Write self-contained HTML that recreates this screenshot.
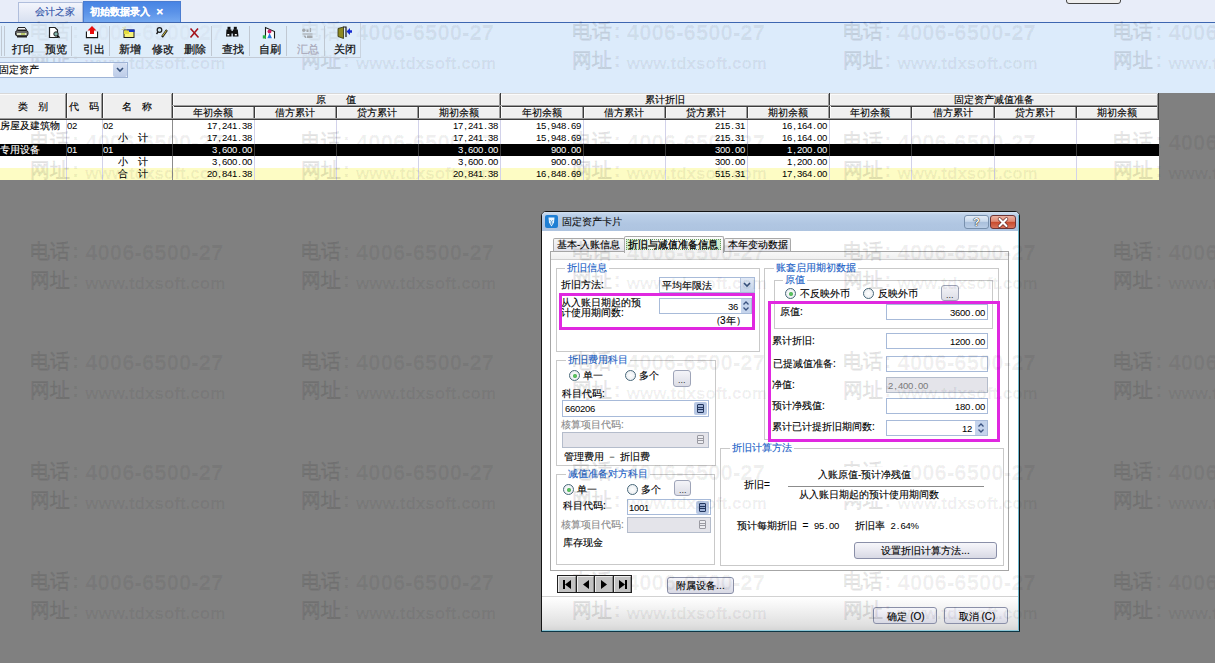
<!DOCTYPE html>
<html><head><meta charset="utf-8">
<style>
*{box-sizing:border-box;margin:0;padding:0}
html,body{width:1215px;height:663px;overflow:hidden;background:#808080;font-family:"Liberation Sans",sans-serif;font-size:10px;color:#000}
.a{position:absolute}
.t{position:absolute;white-space:nowrap;line-height:10px;font-size:10px;-webkit-text-stroke:0.12px currentColor}
.num{font-size:9.5px;-webkit-text-stroke:0}
.num b{display:inline-block;width:5px;text-align:center;font-weight:normal}
/* top */
#top{left:0;top:0;width:1215px;height:22px;background:#e8edf9}
#bline{left:0;top:22px;width:1215px;height:1px;background:#3d66b0}
#tbarea{left:0;top:23px;width:1215px;height:70px;background:#dcebfb}
#tb{left:0;top:23px;width:361px;height:35px;background:rgba(226,238,250,0.55);border-right:1px solid #c9d3df;border-bottom:1px solid #c3cbd6}
.sep{position:absolute;top:26px;width:1px;height:30px;background:#c0c8d2}
.tbt{position:absolute;top:44px;font-size:10.5px;line-height:11px;color:#111;white-space:nowrap;-webkit-text-stroke:0.25px currentColor}
/* table */
#tbl{left:0;top:93px;width:1158px;height:87px;background:#fff}
.hd{position:absolute;background:#efefef}
.vl{position:absolute;width:1px}
.hl{position:absolute;height:1px}

.radio{width:11px;height:11px;border:1px solid #48687a;border-radius:50%;background:radial-gradient(#fff,#e4e8ec)}
.radio.on::after{content:"";position:absolute;left:2.5px;top:2.5px;width:4px;height:4px;border-radius:50%;background:radial-gradient(#6ad06a,#289838)}
.dots{border:1px solid #9ea4b8;border-radius:3px;background:linear-gradient(#f4f4f8,#dcdde6)}
.dots::after{content:"...";position:absolute;left:4px;top:4px;font-size:9px;color:#333;letter-spacing:0px}
.inp{border:1px solid #a7bad9;background:#fff}
.inp.dis{background:#e4e4ea;border-color:#b4bccb}
.lk{width:13px;height:13px;background:#b9c9e5;border-radius:2px}
.lk::after{content:"";position:absolute;left:3px;top:2px;width:5px;height:7px;border:1.5px solid #22365e;border-radius:1px;background:linear-gradient(#22365e,#22365e) 0 2px/100% 1px no-repeat,linear-gradient(#22365e,#22365e) 0 4px/100% 1px no-repeat,#9fb3d8}
.lk.dis{background:transparent}
.lk.dis::after{border-color:#9a9aa2;background:linear-gradient(#9a9aa2,#9a9aa2) 0 2px/100% 1px no-repeat,linear-gradient(#9a9aa2,#9a9aa2) 0 4px/100% 1px no-repeat,#ececf0}
.btn{border:1px solid #8a8fa8;border-radius:3px;background:linear-gradient(#f6f6fa 0%,#e8e8f0 50%,#d8d9e4 100%)}
.nav{display:flex;border:1px solid #202020;background:#202020;gap:1px;height:18px;z-index:60}
.nb{width:17.5px;height:16px;background:#c2c2c2;border-top:1px solid #ececec;border-left:1px solid #ececec;border-right:1px solid #8a8a8a}
.nb svg{display:block;margin-left:-1px;margin-top:-1px}

.wm{position:absolute;white-space:nowrap;font-size:20px;line-height:20px;font-weight:bold;color:rgba(0,0,0,0.06);-webkit-text-stroke:0.5px rgba(0,0,0,0.06)}
.wm i{font-style:normal;margin-left:2px}
.wm.d{font-size:22px;letter-spacing:0.1px}
.wm.u{font-size:17px}
</style></head><body>
<div class="a" id="top"></div>
<div class="a" style="left:1066px;top:-3px;width:55px;height:7px;border:1px solid #444;border-radius:3px;background:#eee"></div>
<div class="a" style="left:18px;top:2px;width:65px;height:20px;background:linear-gradient(#f3f5fc,#d8e0f0);border:1px solid #b0bedc;border-bottom:none"></div>
<div class="t" style="left:35px;top:7px;color:#2b4ea6;font-size:10px">会计之家</div>
<div class="a" style="left:83px;top:1px;width:98px;height:21px;background:linear-gradient(#4784e4,#5a92e8 50%,#74a8f0);border:1px solid #4a7cd0;border-bottom:none"></div>
<div class="t" style="left:90px;top:7px;color:#fff;font-weight:bold;font-size:10px">初始数据录入 <span style="font-size:9px;margin-left:3px">✕</span></div>
<div class="a" id="bline"></div>
<div class="a" id="tbarea"></div>
<div class="a" style="left:0;top:0;width:1215px;height:60px;z-index:60">
<div class="a" id="tb"></div>
<div class="sep" style="left:1px"></div>
<div class="sep" style="left:4px"></div>
<div class="sep" style="left:71px"></div>
<div class="sep" style="left:109px"></div>
<div class="sep" style="left:211px"></div>
<div class="sep" style="left:249px"></div>
<div class="sep" style="left:286px"></div>
<div class="sep" style="left:324px"></div>
<!--ICONS-->
<svg class="a" style="left:0;top:0" width="365" height="60" viewBox="0 0 365 60">
<!-- printer -->
<g>
<path d="M18 27.5 H25 L26.5 30 H17 Z" fill="#f4f4f4" stroke="#222" stroke-width="1"/>
<rect x="15.5" y="30.5" width="12.5" height="5.5" rx="2" fill="#6a6a6a" stroke="#1e1e1e" stroke-width="1"/>
<rect x="17" y="33" width="9.5" height="2" fill="#dfe6c8"/>
<rect x="21" y="33" width="4" height="2" fill="#b9c86a"/>
<rect x="17" y="36" width="10" height="1.5" fill="#222"/>
</g>
<!-- preview -->
<g>
<path d="M49.5 27.5 H55 L57.5 30 V37.5 H49.5 Z" fill="#fff" stroke="#222" stroke-width="1.2"/>
<circle cx="56" cy="34" r="2.2" fill="#7fb3a8" stroke="#1e1e1e" stroke-width="1"/>
<path d="M57.5 35.5 L59.5 37.8" stroke="#111" stroke-width="1.4"/>
</g>
<!-- export -->
<g>
<path d="M86.5 31.5 V37.5 H97.5 V31.5" fill="#fff" stroke="#1a1a1a" stroke-width="1.3"/>
<rect x="87" y="32" width="10" height="5" fill="#fff"/>
<path d="M92 26 L96.5 30.5 H94 V34 H90 V30.5 H87.5 Z" fill="#e80c0c"/>
</g>
<!-- new -->
<g>
<rect x="124" y="30" width="10" height="7.5" fill="#f7f37a" stroke="#1a1a1a" stroke-width="1"/>
<rect x="127" y="29.5" width="7.5" height="2.5" fill="#1230c8"/>
<path d="M124 30.5 H129 V34 H124" fill="#e3dc40"/>
<path d="M122.5 27 L124.5 29 M125 26.5 V28.5 M121.5 29.5 H123.5" stroke="#d8d080" stroke-width="0.8"/>
</g>
<!-- modify -->
<g>
<circle cx="159.5" cy="30" r="2.3" fill="#cfe6f0" stroke="#1d1d1d" stroke-width="1.2"/>
<path d="M158 32 L156.5 34" stroke="#1d1d1d" stroke-width="1.4"/>
<path d="M167 30 L162 37" stroke="#1d1d1d" stroke-width="2.2"/>
<path d="M166.5 30.5 L162.5 36" stroke="#e6d040" stroke-width="0.9"/>
</g>
<!-- delete -->
<path d="M190.5 28.5 L198.5 37.5 M198 28.5 L190.5 37.5" stroke="#a5141e" stroke-width="1.6"/>
<!-- find binoculars -->
<g fill="#111">
<rect x="227.5" y="26.8" width="3" height="3"/>
<rect x="233.8" y="26.8" width="3" height="3"/>
<path d="M226.5 29.5 H231.5 V36.5 H226 Z"/>
<path d="M232.8 29.5 H237.8 L238.5 36.5 H232.8 Z"/>
<rect x="231" y="31" width="2" height="2.5"/>
<rect x="227.3" y="34" width="2" height="1.5" fill="#fff"/>
<rect x="234.8" y="34" width="2" height="1.5" fill="#fff"/>
</g>
<!-- refresh -->
<g>
<path d="M265.5 38.5 V27.5 L274.5 31.5 V38.5" fill="#fff" stroke="#1a1a1a" stroke-width="1.1"/>
<circle cx="269.5" cy="31.5" r="2" fill="#d0206a"/>
<path d="M269.5 33 L267.3 38.3 H272 Z" fill="#2a7ae0"/>
<rect x="262.8" y="35.3" width="3.2" height="3.2" fill="#22b040"/>
</g>
<!-- summary gray -->
<g fill="#a4a8ac">
<circle cx="303.8" cy="30.3" r="1.7"/>
<path d="M306.5 29.5 h2 v2.5 h-2 z M309.8 28 h1.3 v4 h-1.3 z"/>
<path d="M302.5 33.5 h10 v1 h-10 z"/>
<path d="M303.5 35.5 h2 l1 2.5 h-1.5 z M307 35.5 h5.5 v2.6 h-5.5 z"/>
</g>
<!-- close door -->
<g>
<path d="M343 27 H346 V37" fill="none" stroke="#1a1a1a" stroke-width="1.2"/>
<path d="M338 28.5 L343.5 27 V38.5 L338 36.5 Z" fill="#8f8a22" stroke="#2e2e10" stroke-width="0.8"/>
<path d="M346.5 31.5 L350 28 V30.3 H352 V32.7 H350 V35 Z" fill="#1428d0"/>
</g>
</svg>

<!--/ICONS-->
<div class="tbt" style="left:12px">打印</div>
<div class="tbt" style="left:45px">预览</div>
<div class="tbt" style="left:83px">引出</div>
<div class="tbt" style="left:119px">新增</div>
<div class="tbt" style="left:152px">修改</div>
<div class="tbt" style="left:184px">删除</div>
<div class="tbt" style="left:222px">查找</div>
<div class="tbt" style="left:259px">自刷</div>
<div class="tbt" style="left:297px;color:#aab">汇总</div>
<div class="tbt" style="left:334px">关闭</div>
</div>
<!-- combo -->
<div class="a" style="left:0;top:0;width:130px;height:80px;z-index:60">
<div class="a" style="left:-1px;top:62px;width:129px;height:16px;background:#fff;border:1px solid #9fb4d6"></div>
<div class="t" style="left:-1px;top:65px;font-size:10px">固定资产</div>
<div class="a" style="left:113px;top:63px;width:14px;height:14px;background:linear-gradient(#d6e0f2,#bccce8);border-radius:2px"></div>
<svg class="a" style="left:115px;top:66px" width="10" height="8" viewBox="0 0 10 8"><path d="M2 2 L5 5 L8 2" stroke="#35507a" stroke-width="1.6" fill="none"/></svg>
</div>

<!-- TABLE placeholder -->
<!--TBL-->
<div class="a" style="left:0;top:93px;width:1158px;height:27px;background:#efefef"></div>
<div class="a" style="left:0;top:120px;width:1159px;height:60px;background:#fff"></div>
<div class="a" style="left:0;top:144px;width:1159px;height:12px;background:#000000"></div>
<div class="a" style="left:0;top:168px;width:1159px;height:12px;background:#fdfcc4"></div>
<div class="vl" style="left:66px;top:120px;height:60px;background:#d2d2ea"></div>
<div class="vl" style="left:102px;top:120px;height:60px;background:#d2d2ea"></div>
<div class="vl" style="left:172px;top:120px;height:60px;background:#8c8c8c"></div>
<div class="vl" style="left:254px;top:120px;height:60px;background:#d2d2ea"></div>
<div class="vl" style="left:336px;top:120px;height:60px;background:#d2d2ea"></div>
<div class="vl" style="left:418px;top:120px;height:60px;background:#d2d2ea"></div>
<div class="vl" style="left:500px;top:120px;height:60px;background:#d2d2ea"></div>
<div class="vl" style="left:583px;top:120px;height:60px;background:#d2d2ea"></div>
<div class="vl" style="left:665px;top:120px;height:60px;background:#d2d2ea"></div>
<div class="vl" style="left:747px;top:120px;height:60px;background:#d2d2ea"></div>
<div class="vl" style="left:829px;top:120px;height:60px;background:#d2d2ea"></div>
<div class="vl" style="left:911px;top:120px;height:60px;background:#d2d2ea"></div>
<div class="vl" style="left:994px;top:120px;height:60px;background:#d2d2ea"></div>
<div class="vl" style="left:1076px;top:120px;height:60px;background:#d2d2ea"></div>
<div class="hl" style="left:0;top:93px;width:1158px;background:#d8d8d8"></div>
<div class="hl" style="left:0;top:94px;width:1158px;background:#fbfbfb"></div>
<div class="hl" style="left:172px;top:106px;width:986px;background:#3c3c3c"></div>
<div class="hl" style="left:172px;top:107px;width:986px;background:#fbfbfb"></div>
<div class="hl" style="left:0;top:119px;width:1158px;background:#3c3c3c"></div>
<div class="vl" style="left:66px;top:93px;height:27px;background:#3c3c3c"></div>
<div class="vl" style="left:67px;top:94px;height:25px;background:#fbfbfb"></div>
<div class="vl" style="left:102px;top:93px;height:27px;background:#3c3c3c"></div>
<div class="vl" style="left:103px;top:94px;height:25px;background:#fbfbfb"></div>
<div class="vl" style="left:172px;top:93px;height:27px;background:#3c3c3c"></div>
<div class="vl" style="left:173px;top:94px;height:25px;background:#fbfbfb"></div>
<div class="vl" style="left:500px;top:93px;height:27px;background:#3c3c3c"></div>
<div class="vl" style="left:501px;top:94px;height:25px;background:#fbfbfb"></div>
<div class="vl" style="left:829px;top:93px;height:27px;background:#3c3c3c"></div>
<div class="vl" style="left:830px;top:94px;height:25px;background:#fbfbfb"></div>
<div class="vl" style="left:1158px;top:93px;height:27px;background:#3c3c3c"></div>

<div class="vl" style="left:254px;top:106px;height:14px;background:#3c3c3c"></div>
<div class="vl" style="left:255px;top:107px;height:12px;background:#fbfbfb"></div>
<div class="vl" style="left:336px;top:106px;height:14px;background:#3c3c3c"></div>
<div class="vl" style="left:337px;top:107px;height:12px;background:#fbfbfb"></div>
<div class="vl" style="left:418px;top:106px;height:14px;background:#3c3c3c"></div>
<div class="vl" style="left:419px;top:107px;height:12px;background:#fbfbfb"></div>
<div class="vl" style="left:583px;top:106px;height:14px;background:#3c3c3c"></div>
<div class="vl" style="left:584px;top:107px;height:12px;background:#fbfbfb"></div>
<div class="vl" style="left:665px;top:106px;height:14px;background:#3c3c3c"></div>
<div class="vl" style="left:666px;top:107px;height:12px;background:#fbfbfb"></div>
<div class="vl" style="left:747px;top:106px;height:14px;background:#3c3c3c"></div>
<div class="vl" style="left:748px;top:107px;height:12px;background:#fbfbfb"></div>
<div class="vl" style="left:911px;top:106px;height:14px;background:#3c3c3c"></div>
<div class="vl" style="left:912px;top:107px;height:12px;background:#fbfbfb"></div>
<div class="vl" style="left:994px;top:106px;height:14px;background:#3c3c3c"></div>
<div class="vl" style="left:995px;top:107px;height:12px;background:#fbfbfb"></div>
<div class="vl" style="left:1076px;top:106px;height:14px;background:#3c3c3c"></div>
<div class="vl" style="left:1077px;top:107px;height:12px;background:#fbfbfb"></div>
<div class="vl" style="left:65px;top:94px;height:25px;background:#9c9c9c"></div>
<div class="vl" style="left:101px;top:94px;height:25px;background:#9c9c9c"></div>
<div class="vl" style="left:171px;top:94px;height:25px;background:#9c9c9c"></div>
<div class="vl" style="left:499px;top:94px;height:25px;background:#9c9c9c"></div>
<div class="vl" style="left:828px;top:94px;height:25px;background:#9c9c9c"></div>
<div class="vl" style="left:1157px;top:94px;height:25px;background:#9c9c9c"></div>
<div class="vl" style="left:253px;top:107px;height:12px;background:#9c9c9c"></div>
<div class="vl" style="left:335px;top:107px;height:12px;background:#9c9c9c"></div>
<div class="vl" style="left:417px;top:107px;height:12px;background:#9c9c9c"></div>
<div class="vl" style="left:582px;top:107px;height:12px;background:#9c9c9c"></div>
<div class="vl" style="left:664px;top:107px;height:12px;background:#9c9c9c"></div>
<div class="vl" style="left:746px;top:107px;height:12px;background:#9c9c9c"></div>
<div class="vl" style="left:910px;top:107px;height:12px;background:#9c9c9c"></div>
<div class="vl" style="left:993px;top:107px;height:12px;background:#9c9c9c"></div>
<div class="vl" style="left:1075px;top:107px;height:12px;background:#9c9c9c"></div>
<div class="hl" style="left:172px;top:105px;width:986px;background:#9c9c9c"></div>
<div class="hl" style="left:0;top:118px;width:1158px;background:#9c9c9c"></div>
<div class="t" style="left:0px;top:102px;width:66px;text-align:center;">类　别</div>
<div class="t" style="left:66px;top:102px;width:36px;text-align:center;">代　码</div>
<div class="t" style="left:102px;top:102px;width:70px;text-align:center;">名　称</div>
<div class="t" style="left:172px;top:95px;width:328px;text-align:center;">原　　值</div>
<div class="t" style="left:500px;top:95px;width:329px;text-align:center;">累计折旧</div>
<div class="t" style="left:829px;top:95px;width:329px;text-align:center;">固定资产减值准备</div>
<div class="t" style="left:172px;top:108px;width:82px;text-align:center;">年初余额</div>
<div class="t" style="left:254px;top:108px;width:82px;text-align:center;">借方累计</div>
<div class="t" style="left:336px;top:108px;width:82px;text-align:center;">贷方累计</div>
<div class="t" style="left:418px;top:108px;width:82px;text-align:center;">期初余额</div>
<div class="t" style="left:500px;top:108px;width:83px;text-align:center;">年初余额</div>
<div class="t" style="left:583px;top:108px;width:82px;text-align:center;">借方累计</div>
<div class="t" style="left:665px;top:108px;width:82px;text-align:center;">贷方累计</div>
<div class="t" style="left:747px;top:108px;width:82px;text-align:center;">期初余额</div>
<div class="t" style="left:829px;top:108px;width:82px;text-align:center;">年初余额</div>
<div class="t" style="left:911px;top:108px;width:83px;text-align:center;">借方累计</div>
<div class="t" style="left:994px;top:108px;width:82px;text-align:center;">贷方累计</div>
<div class="t" style="left:1076px;top:108px;width:82px;text-align:center;">期初余额</div>
<div class="t" style="left:0px;top:121px;color:#000">房屋及建筑物</div>
<div class="t num" style="left:67px;top:121px;color:#000"><b>0</b><b>2</b></div>
<div class="t num" style="left:103px;top:121px;color:#000"><b>0</b><b>2</b></div>
<div class="t num" style="left:172px;width:80px;text-align:right;top:121px;color:#000"><b>1</b><b>7</b><b>,</b><b>2</b><b>4</b><b>1</b><b>.</b><b>3</b><b>8</b></div>
<div class="t num" style="left:418px;width:80px;text-align:right;top:121px;color:#000"><b>1</b><b>7</b><b>,</b><b>2</b><b>4</b><b>1</b><b>.</b><b>3</b><b>8</b></div>
<div class="t num" style="left:501px;width:80px;text-align:right;top:121px;color:#000"><b>1</b><b>5</b><b>,</b><b>9</b><b>4</b><b>8</b><b>.</b><b>6</b><b>9</b></div>
<div class="t num" style="left:665px;width:80px;text-align:right;top:121px;color:#000"><b>2</b><b>1</b><b>5</b><b>.</b><b>3</b><b>1</b></div>
<div class="t num" style="left:747px;width:80px;text-align:right;top:121px;color:#000"><b>1</b><b>6</b><b>,</b><b>1</b><b>6</b><b>4</b><b>.</b><b>0</b><b>0</b></div>
<div class="t" style="left:118px;top:133px;color:#000">小　计</div>
<div class="t num" style="left:172px;width:80px;text-align:right;top:133px;color:#000"><b>1</b><b>7</b><b>,</b><b>2</b><b>4</b><b>1</b><b>.</b><b>3</b><b>8</b></div>
<div class="t num" style="left:418px;width:80px;text-align:right;top:133px;color:#000"><b>1</b><b>7</b><b>,</b><b>2</b><b>4</b><b>1</b><b>.</b><b>3</b><b>8</b></div>
<div class="t num" style="left:501px;width:80px;text-align:right;top:133px;color:#000"><b>1</b><b>5</b><b>,</b><b>9</b><b>4</b><b>8</b><b>.</b><b>6</b><b>9</b></div>
<div class="t num" style="left:665px;width:80px;text-align:right;top:133px;color:#000"><b>2</b><b>1</b><b>5</b><b>.</b><b>3</b><b>1</b></div>
<div class="t num" style="left:747px;width:80px;text-align:right;top:133px;color:#000"><b>1</b><b>6</b><b>,</b><b>1</b><b>6</b><b>4</b><b>.</b><b>0</b><b>0</b></div>
<div class="t" style="left:0px;top:145px;color:#fff">专用设备</div>
<div class="t num" style="left:67px;top:145px;color:#fff"><b>0</b><b>1</b></div>
<div class="t num" style="left:103px;top:145px;color:#fff"><b>0</b><b>1</b></div>
<div class="t num" style="left:172px;width:80px;text-align:right;top:145px;color:#fff"><b>3</b><b>,</b><b>6</b><b>0</b><b>0</b><b>.</b><b>0</b><b>0</b></div>
<div class="t num" style="left:418px;width:80px;text-align:right;top:145px;color:#fff"><b>3</b><b>,</b><b>6</b><b>0</b><b>0</b><b>.</b><b>0</b><b>0</b></div>
<div class="t num" style="left:501px;width:80px;text-align:right;top:145px;color:#fff"><b>9</b><b>0</b><b>0</b><b>.</b><b>0</b><b>0</b></div>
<div class="t num" style="left:665px;width:80px;text-align:right;top:145px;color:#fff"><b>3</b><b>0</b><b>0</b><b>.</b><b>0</b><b>0</b></div>
<div class="t num" style="left:747px;width:80px;text-align:right;top:145px;color:#fff"><b>1</b><b>,</b><b>2</b><b>0</b><b>0</b><b>.</b><b>0</b><b>0</b></div>
<div class="t" style="left:118px;top:157px;color:#000">小　计</div>
<div class="t num" style="left:172px;width:80px;text-align:right;top:157px;color:#000"><b>3</b><b>,</b><b>6</b><b>0</b><b>0</b><b>.</b><b>0</b><b>0</b></div>
<div class="t num" style="left:418px;width:80px;text-align:right;top:157px;color:#000"><b>3</b><b>,</b><b>6</b><b>0</b><b>0</b><b>.</b><b>0</b><b>0</b></div>
<div class="t num" style="left:501px;width:80px;text-align:right;top:157px;color:#000"><b>9</b><b>0</b><b>0</b><b>.</b><b>0</b><b>0</b></div>
<div class="t num" style="left:665px;width:80px;text-align:right;top:157px;color:#000"><b>3</b><b>0</b><b>0</b><b>.</b><b>0</b><b>0</b></div>
<div class="t num" style="left:747px;width:80px;text-align:right;top:157px;color:#000"><b>1</b><b>,</b><b>2</b><b>0</b><b>0</b><b>.</b><b>0</b><b>0</b></div>
<div class="t" style="left:118px;top:169px;color:#000">合　计</div>
<div class="t num" style="left:172px;width:80px;text-align:right;top:169px;color:#000"><b>2</b><b>0</b><b>,</b><b>8</b><b>4</b><b>1</b><b>.</b><b>3</b><b>8</b></div>
<div class="t num" style="left:418px;width:80px;text-align:right;top:169px;color:#000"><b>2</b><b>0</b><b>,</b><b>8</b><b>4</b><b>1</b><b>.</b><b>3</b><b>8</b></div>
<div class="t num" style="left:501px;width:80px;text-align:right;top:169px;color:#000"><b>1</b><b>6</b><b>,</b><b>8</b><b>4</b><b>8</b><b>.</b><b>6</b><b>9</b></div>
<div class="t num" style="left:665px;width:80px;text-align:right;top:169px;color:#000"><b>5</b><b>1</b><b>5</b><b>.</b><b>3</b><b>1</b></div>
<div class="t num" style="left:747px;width:80px;text-align:right;top:169px;color:#000"><b>1</b><b>7</b><b>,</b><b>3</b><b>6</b><b>4</b><b>.</b><b>0</b><b>0</b></div>
<div class="vl" style="left:66px;top:144px;height:12px;background:#383838"></div><div class="vl" style="left:102px;top:144px;height:12px;background:#383838"></div><div class="vl" style="left:172px;top:144px;height:12px;background:#383838"></div><div class="vl" style="left:254px;top:144px;height:12px;background:#383838"></div><div class="vl" style="left:336px;top:144px;height:12px;background:#383838"></div><div class="vl" style="left:418px;top:144px;height:12px;background:#383838"></div><div class="vl" style="left:500px;top:144px;height:12px;background:#383838"></div><div class="vl" style="left:583px;top:144px;height:12px;background:#383838"></div><div class="vl" style="left:665px;top:144px;height:12px;background:#383838"></div><div class="vl" style="left:747px;top:144px;height:12px;background:#383838"></div><div class="vl" style="left:829px;top:144px;height:12px;background:#383838"></div><div class="vl" style="left:911px;top:144px;height:12px;background:#383838"></div><div class="vl" style="left:994px;top:144px;height:12px;background:#383838"></div><div class="vl" style="left:1076px;top:144px;height:12px;background:#383838"></div>
<!--/TBL-->

<!--DLG-->
<!-- DIALOG -->
<div class="a" style="left:541px;top:211px;width:479px;height:421px;background:#fff;border:1px solid #141414;border-radius:5px 5px 0 0"></div>
<div class="a" style="left:542px;top:212px;width:477px;height:19px;background:linear-gradient(#d3e1f1 0px,#bcd0e8 3px,#b0c6e2 12px,#aec4e0 19px);border-radius:4px 4px 0 0"></div>
<div class="a" style="left:1018px;top:215px;width:1px;height:415px;background:#6fb8cf"></div>
<div class="a" style="left:542px;top:630px;width:477px;height:1px;background:#8cc8d8"></div><div class="a" style="left:541px;top:631px;width:479px;height:1px;background:#0e3644"></div>
<!-- icon -->
<div class="a" style="left:545px;top:215px;width:13px;height:13px;background:#1f7fd4;border-radius:2px"></div>
<svg class="a" style="left:545px;top:215px" width="13" height="13" viewBox="0 0 13 13"><path d="M3.5 2.5 L9.5 2.5 L9 7.5 L6.5 11.5 L4 7.5 Z" fill="#eaf6ff"/><path d="M5 5 L6.5 7 L8 5 M6.5 7 V10 M5.2 8 H7.8" stroke="#5a9ad0" stroke-width="0.8" fill="none"/></svg>
<div class="t" style="left:562px;top:217px;font-size:10px;color:#111">固定资产卡片</div>
<!-- help / close -->
<div class="a" style="left:964px;top:215px;width:25px;height:14px;border:1px solid #7890ad;border-radius:3px;background:linear-gradient(#e3ecf7 0%,#c9d9ec 45%,#a9bfdb 50%,#b9cde6 100%)"></div>
<div class="t" style="left:973px;top:217px;font-size:11px;line-height:11px;font-weight:bold;color:#fff;-webkit-text-stroke:0;text-shadow:0 0 1px #000,0 0 1px #000">?</div>
<div class="a" style="left:990px;top:215px;width:26px;height:14px;border:1px solid #6d3434;border-radius:3px;background:linear-gradient(#eab2a4 0%,#e08a74 45%,#c84a2c 50%,#d8735a 100%)"></div>
<svg class="a" style="left:990px;top:215px" width="26" height="14" viewBox="0 0 26 14"><path d="M9.5 4 L16.5 11 M16.5 4 L9.5 11" stroke="#5a2020" stroke-width="3.4" stroke-linecap="round"/><path d="M9.5 4 L16.5 11 M16.5 4 L9.5 11" stroke="#fff" stroke-width="2.2" stroke-linecap="round"/></svg>

<!-- tabs -->
<div class="a" style="left:553px;top:238px;width:72px;height:14px;border:1px solid #a9a9a9;border-bottom:none;border-radius:2px 2px 0 0;background:linear-gradient(#f6f6f6,#e2e2ea)"></div>
<div class="t" style="left:557px;top:240px">基本-入账信息</div>
<div class="a" style="left:724px;top:238px;width:67px;height:14px;border:1px solid #a9a9a9;border-bottom:none;border-radius:2px 2px 0 0;background:linear-gradient(#f6f6f6,#e2e2ea)"></div>
<div class="t" style="left:728px;top:240px">本年变动数据</div>
<!-- panel -->
<div class="a" style="left:550px;top:251px;width:459px;height:320px;border:1px solid #a6a6a6;background:#fff"></div>
<div class="a" style="left:551px;top:252px;width:457px;height:7px;background:linear-gradient(#f8f8f8,#f0f0f0)"></div>
<div class="a" style="left:551px;top:259px;width:457px;height:1px;background:#cfcfcf"></div>
<!-- active tab -->
<div class="a" style="left:624px;top:236px;width:100px;height:17px;border:1px solid #a9a9a9;border-bottom:none;border-radius:2px 2px 0 0;background:linear-gradient(#fbfbfb,#f3f3f3)"></div>
<div class="a" style="left:626px;top:239px;width:95px;height:11px;border:1px dotted #6a9a5a;background:linear-gradient(90deg,#cdeccd,#eef8ee 20%,#f8fcf8 50%,#eef8ee 80%,#cdeccd)"></div>
<div class="t" style="left:628px;top:240px;-webkit-text-stroke:0.3px #000">折旧与减值准备信息</div>

<!-- group: 折旧信息 -->
<div class="a" style="left:556px;top:268px;width:204px;height:84px;border:1px solid #c9c9c9"></div>
<div class="t" style="left:565px;top:263px;padding:0 2px;background:#fff;color:#1b5fc6">折旧信息</div>
<div class="t" style="left:561px;top:280px">折旧方法:</div>
<div class="a" style="left:659px;top:277px;width:96px;height:16px;border:1px solid #a8bbd9;background:#fff"></div>
<div class="t" style="left:662px;top:281px">平均年限法</div>
<div class="a" style="left:740px;top:278px;width:14px;height:14px;background:linear-gradient(#e2eaf6,#c3d2ea);border-left:1px solid #b6c5de"></div>
<svg class="a" style="left:742px;top:281px" width="10" height="8" viewBox="0 0 10 8"><path d="M2 2 L5 5 L8 2" stroke="#35507a" stroke-width="1.6" fill="none"/></svg>
<div class="t" style="left:561px;top:298px;line-height:10px">从入账日期起的预<br>计使用期间数:</div>
<div class="a" style="left:659px;top:298px;width:93px;height:16px;border:1px solid #a8bbd9;background:#fff"></div>
<div class="t num" style="left:700px;top:302px;width:38px;text-align:right"><b>3</b><b>6</b></div>
<div class="a" style="left:741px;top:299px;width:10px;height:14px;background:#c5d4ec"></div>
<svg class="a" style="left:741px;top:299px" width="10" height="14" viewBox="0 0 10 14"><path d="M2.5 5.5 L5 3 L7.5 5.5 M2.5 8.5 L5 11 L7.5 8.5" stroke="#3a5280" stroke-width="1.3" fill="none"/></svg>
<div class="t" style="left:711px;top:316px;font-size:10px">（<span style="margin-left:-1px">3</span>年）</div>
<div class="a" style="left:559px;top:293px;width:196px;height:37px;border:3px solid #e028e0"></div>

<!-- group: 折旧费用科目 -->
<div class="a" style="left:556px;top:360px;width:160px;height:106px;border:1px solid #c9c9c9"></div>
<div class="t" style="left:566px;top:355px;padding:0 2px;background:#fff;color:#1b5fc6">折旧费用科目</div>
<div class="a radio on" style="left:569px;top:370px"></div>
<div class="t" style="left:583px;top:371px">单一</div>
<div class="a radio" style="left:625px;top:370px"></div>
<div class="t" style="left:639px;top:371px">多个</div>
<div class="a dots" style="left:673px;top:370px;width:18px;height:17px"></div>
<div class="t" style="left:562px;top:389px">科目代码:</div>
<div class="a inp" style="left:562px;top:400px;width:147px;height:17px"></div>
<div class="t num" style="left:565px;top:404px"><b>6</b><b>6</b><b>0</b><b>2</b><b>0</b><b>6</b></div>
<div class="a lk" style="left:694px;top:402px"></div>
<div class="t" style="left:561px;top:420px;color:#8a8a8a">核算项目代码:</div>
<div class="a inp dis" style="left:562px;top:432px;width:147px;height:16px"></div>
<div class="a lk dis" style="left:694px;top:433px"></div>
<div class="t" style="left:564px;top:452px">管理费用 － 折旧费</div>

<!-- group: 减值准备对方科目 -->
<div class="a" style="left:556px;top:474px;width:159px;height:91px;border:1px solid #c9c9c9"></div>
<div class="t" style="left:566px;top:469px;padding:0 2px;background:#fff;color:#1b5fc6">减值准备对方科目</div>
<div class="a radio on" style="left:563px;top:484px"></div>
<div class="t" style="left:577px;top:485px">单一</div>
<div class="a radio" style="left:627px;top:484px"></div>
<div class="t" style="left:641px;top:485px">多个</div>
<div class="a dots" style="left:674px;top:480px;width:17px;height:16px"></div>
<div class="t" style="left:563px;top:501px">科目代码:</div>
<div class="a inp" style="left:627px;top:499px;width:84px;height:16px"></div>
<div class="t num" style="left:629px;top:503px"><b>1</b><b>0</b><b>0</b><b>1</b></div>
<div class="a lk" style="left:696px;top:501px"></div>
<div class="t" style="left:561px;top:520px;color:#8a8a8a">核算项目代码:</div>
<div class="a inp dis" style="left:627px;top:517px;width:84px;height:16px"></div>
<div class="a lk dis" style="left:696px;top:518px"></div>
<div class="t" style="left:563px;top:538px">库存现金</div>

<!-- group: 账套启用期初数据 -->
<div class="a" style="left:764px;top:268px;width:235px;height:172px;border:1px solid #c9c9c9"></div>
<div class="t" style="left:774px;top:263px;padding:0 2px;background:#fff;color:#1b5fc6">账套启用期初数据</div>
<div class="a" style="left:774px;top:280px;width:219px;height:49px;border:1px solid #c9c9c9"></div>
<div class="t" style="left:783px;top:275px;padding:0 2px;background:#fff;color:#1b5fc6">原值</div>
<div class="a radio on" style="left:785px;top:288px"></div>
<div class="t" style="left:800px;top:289px">不反映外币</div>
<div class="a radio" style="left:863px;top:288px"></div>
<div class="t" style="left:878px;top:289px">反映外币</div>
<div class="a dots" style="left:941px;top:285px;width:18px;height:16px"></div>
<div class="t" style="left:780px;top:307px">原值:</div>
<div class="a inp" style="left:886px;top:304px;width:102px;height:16px"></div>
<div class="t num" style="left:900px;top:308px;width:85px;text-align:right"><b>3</b><b>6</b><b>0</b><b>0</b><b>.</b><b>0</b><b>0</b></div>
<div class="t" style="left:772px;top:336px">累计折旧:</div>
<div class="a inp" style="left:886px;top:333px;width:102px;height:16px"></div>
<div class="t num" style="left:900px;top:337px;width:85px;text-align:right"><b>1</b><b>2</b><b>0</b><b>0</b><b>.</b><b>0</b><b>0</b></div>
<div class="t" style="left:773px;top:359px">已提减值准备:</div>
<div class="a inp" style="left:886px;top:356px;width:102px;height:16px"></div>
<div class="t" style="left:772px;top:380px">净值:</div>
<div class="a inp dis" style="left:886px;top:377px;width:102px;height:16px"></div>
<div class="t num" style="left:888px;top:381px;color:#7a7a7a"><b>2</b><b>,</b><b>4</b><b>0</b><b>0</b><b>.</b><b>0</b><b>0</b></div>
<div class="t" style="left:772px;top:401px">预计净残值:</div>
<div class="a inp" style="left:886px;top:398px;width:102px;height:16px"></div>
<div class="t num" style="left:900px;top:402px;width:85px;text-align:right"><b>1</b><b>8</b><b>0</b><b>.</b><b>0</b><b>0</b></div>
<div class="t" style="left:772px;top:422px">累计已计提折旧期间数:</div>
<div class="a inp" style="left:886px;top:420px;width:102px;height:16px"></div>
<div class="t num" style="left:920px;top:424px;width:52px;text-align:right"><b>1</b><b>2</b></div>
<div class="a" style="left:975px;top:421px;width:12px;height:14px;background:#c5d4ec"></div>
<svg class="a" style="left:976px;top:421px" width="10" height="14" viewBox="0 0 10 14"><path d="M2.5 5.5 L5 3 L7.5 5.5 M2.5 8.5 L5 11 L7.5 8.5" stroke="#3a5280" stroke-width="1.3" fill="none"/></svg>
<div class="a" style="left:768px;top:301px;width:232px;height:141px;border:3px solid #e028e0"></div>

<!-- group: 折旧计算方法 -->
<div class="a" style="left:720px;top:448px;width:284px;height:118px;border:1px solid #c9c9c9"></div>
<div class="t" style="left:730px;top:443px;padding:0 2px;background:#fff;color:#1b5fc6">折旧计算方法</div>
<div class="t" style="left:744px;top:480px">折旧=</div>
<div class="a" style="left:790px;top:467px;width:121px;height:16px;background:#fff;z-index:60"></div><div class="t" style="left:818px;top:470px;z-index:61">入账原值-预计净残值</div>
<div class="a" style="left:788px;top:486px;width:196px;height:1px;background:#8c8c8c"></div>
<div class="a" style="left:790px;top:488px;width:150px;height:13px;background:#fff;z-index:60"></div><div class="t" style="left:799px;top:490px;z-index:61">从入账日期起的预计使用期间数</div>
<div class="t" style="left:737px;top:521px">预计每期折旧&nbsp; = &nbsp;<span class="num"><b>9</b><b>5</b><b>.</b><b>0</b><b>0</b></span></div>
<div class="t" style="left:855px;top:521px">折旧率&nbsp; <span class="num"><b>2</b><b>.</b><b>6</b><b>4</b><b>%</b></span></div>
<div class="a btn" style="left:854px;top:542px;width:143px;height:17px"></div>
<div class="t" style="left:854px;top:546px;width:143px;text-align:center">设置折旧计算方法...</div>

<!-- nav buttons -->
<div class="a nav" style="left:557px;top:575px"><div class="nb"><svg width="18" height="17"><path d="M6 4 V13" stroke="#000" stroke-width="2"/><path d="M13 4 L7 8.5 L13 13 Z"/></svg></div><div class="nb"><svg width="18" height="17"><path d="M12 4 L6 8.5 L12 13 Z"/></svg></div><div class="nb"><svg width="18" height="17"><path d="M6 4 L12 8.5 L6 13 Z"/></svg></div><div class="nb"><svg width="18" height="17"><path d="M5 4 L11 8.5 L5 13 Z"/><path d="M12 4 V13" stroke="#000" stroke-width="2"/></svg></div></div>
<div class="a btn" style="left:667px;top:577px;width:67px;height:17px"></div>
<div class="t" style="left:667px;top:581px;width:67px;text-align:center">附属设备...</div>
<!-- footer -->
<div class="a" style="left:542px;top:596px;width:476px;height:1px;background:#d2d2d2"></div>
<div class="a" style="left:542px;top:597px;width:476px;height:33px;background:linear-gradient(#ffffff 0%,#fafafa 15%,#ededed 50%,#e0e0e0 85%,#d6d6d6 100%)"></div>
<div class="a btn" style="left:873px;top:607px;width:64px;height:17px"></div>
<div class="t" style="left:874px;top:612px;width:64px;text-align:center">确定 <span style="font-size:10px">(O)</span></div>
<div class="a btn" style="left:944px;top:607px;width:64px;height:17px"></div>
<div class="t" style="left:945px;top:612px;width:64px;text-align:center">取消 <span style="font-size:10px">(C)</span></div>

<!--/DLG-->
<!--WM-->
<div class="a" style="left:0;top:0;width:1215px;height:663px;pointer-events:none;z-index:50">
<div class="wm" style="left:30.2px;top:20.7px">电话<i>:</i></div><div class="wm d" style="left:85.2px;top:22.7px">4006-6500-27</div>
<div class="wm" style="left:30.2px;top:49.7px">网址<i>:</i></div><div class="wm u" style="left:85.2px;top:53.7px">www.tdxsoft.com</div>
<div class="wm" style="left:301.0px;top:20.7px">电话<i>:</i></div><div class="wm d" style="left:356.0px;top:22.7px">4006-6500-27</div>
<div class="wm" style="left:301.0px;top:49.7px">网址<i>:</i></div><div class="wm u" style="left:356.0px;top:53.7px">www.tdxsoft.com</div>
<div class="wm" style="left:571.8px;top:20.7px">电话<i>:</i></div><div class="wm d" style="left:626.8px;top:22.7px">4006-6500-27</div>
<div class="wm" style="left:571.8px;top:49.7px">网址<i>:</i></div><div class="wm u" style="left:626.8px;top:53.7px">www.tdxsoft.com</div>
<div class="wm" style="left:842.6px;top:20.7px">电话<i>:</i></div><div class="wm d" style="left:897.6px;top:22.7px">4006-6500-27</div>
<div class="wm" style="left:842.6px;top:49.7px">网址<i>:</i></div><div class="wm u" style="left:897.6px;top:53.7px">www.tdxsoft.com</div>
<div class="wm" style="left:1113.4px;top:20.7px">电话<i>:</i></div><div class="wm d" style="left:1168.4px;top:22.7px">4006-6500-27</div>
<div class="wm" style="left:1113.4px;top:49.7px">网址<i>:</i></div><div class="wm u" style="left:1168.4px;top:53.7px">www.tdxsoft.com</div>
<div class="wm" style="left:30.2px;top:130.7px">电话<i>:</i></div><div class="wm d" style="left:85.2px;top:132.7px">4006-6500-27</div>
<div class="wm" style="left:30.2px;top:159.7px">网址<i>:</i></div><div class="wm u" style="left:85.2px;top:163.7px">www.tdxsoft.com</div>
<div class="wm" style="left:301.0px;top:130.7px">电话<i>:</i></div><div class="wm d" style="left:356.0px;top:132.7px">4006-6500-27</div>
<div class="wm" style="left:301.0px;top:159.7px">网址<i>:</i></div><div class="wm u" style="left:356.0px;top:163.7px">www.tdxsoft.com</div>
<div class="wm" style="left:571.8px;top:130.7px">电话<i>:</i></div><div class="wm d" style="left:626.8px;top:132.7px">4006-6500-27</div>
<div class="wm" style="left:571.8px;top:159.7px">网址<i>:</i></div><div class="wm u" style="left:626.8px;top:163.7px">www.tdxsoft.com</div>
<div class="wm" style="left:842.6px;top:130.7px">电话<i>:</i></div><div class="wm d" style="left:897.6px;top:132.7px">4006-6500-27</div>
<div class="wm" style="left:842.6px;top:159.7px">网址<i>:</i></div><div class="wm u" style="left:897.6px;top:163.7px">www.tdxsoft.com</div>
<div class="wm" style="left:1113.4px;top:130.7px">电话<i>:</i></div><div class="wm d" style="left:1168.4px;top:132.7px">4006-6500-27</div>
<div class="wm" style="left:1113.4px;top:159.7px">网址<i>:</i></div><div class="wm u" style="left:1168.4px;top:163.7px">www.tdxsoft.com</div>
<div class="wm" style="left:30.2px;top:240.7px">电话<i>:</i></div><div class="wm d" style="left:85.2px;top:242.7px">4006-6500-27</div>
<div class="wm" style="left:30.2px;top:269.7px">网址<i>:</i></div><div class="wm u" style="left:85.2px;top:273.7px">www.tdxsoft.com</div>
<div class="wm" style="left:301.0px;top:240.7px">电话<i>:</i></div><div class="wm d" style="left:356.0px;top:242.7px">4006-6500-27</div>
<div class="wm" style="left:301.0px;top:269.7px">网址<i>:</i></div><div class="wm u" style="left:356.0px;top:273.7px">www.tdxsoft.com</div>
<div class="wm" style="left:571.8px;top:240.7px">电话<i>:</i></div><div class="wm d" style="left:626.8px;top:242.7px">4006-6500-27</div>
<div class="wm" style="left:571.8px;top:269.7px">网址<i>:</i></div><div class="wm u" style="left:626.8px;top:273.7px">www.tdxsoft.com</div>
<div class="wm" style="left:842.6px;top:240.7px">电话<i>:</i></div><div class="wm d" style="left:897.6px;top:242.7px">4006-6500-27</div>
<div class="wm" style="left:842.6px;top:269.7px">网址<i>:</i></div><div class="wm u" style="left:897.6px;top:273.7px">www.tdxsoft.com</div>
<div class="wm" style="left:1113.4px;top:240.7px">电话<i>:</i></div><div class="wm d" style="left:1168.4px;top:242.7px">4006-6500-27</div>
<div class="wm" style="left:1113.4px;top:269.7px">网址<i>:</i></div><div class="wm u" style="left:1168.4px;top:273.7px">www.tdxsoft.com</div>
<div class="wm" style="left:30.2px;top:350.7px">电话<i>:</i></div><div class="wm d" style="left:85.2px;top:352.7px">4006-6500-27</div>
<div class="wm" style="left:30.2px;top:379.7px">网址<i>:</i></div><div class="wm u" style="left:85.2px;top:383.7px">www.tdxsoft.com</div>
<div class="wm" style="left:301.0px;top:350.7px">电话<i>:</i></div><div class="wm d" style="left:356.0px;top:352.7px">4006-6500-27</div>
<div class="wm" style="left:301.0px;top:379.7px">网址<i>:</i></div><div class="wm u" style="left:356.0px;top:383.7px">www.tdxsoft.com</div>
<div class="wm" style="left:571.8px;top:350.7px">电话<i>:</i></div><div class="wm d" style="left:626.8px;top:352.7px">4006-6500-27</div>
<div class="wm" style="left:571.8px;top:379.7px">网址<i>:</i></div><div class="wm u" style="left:626.8px;top:383.7px">www.tdxsoft.com</div>
<div class="wm" style="left:842.6px;top:350.7px">电话<i>:</i></div><div class="wm d" style="left:897.6px;top:352.7px">4006-6500-27</div>
<div class="wm" style="left:842.6px;top:379.7px">网址<i>:</i></div><div class="wm u" style="left:897.6px;top:383.7px">www.tdxsoft.com</div>
<div class="wm" style="left:1113.4px;top:350.7px">电话<i>:</i></div><div class="wm d" style="left:1168.4px;top:352.7px">4006-6500-27</div>
<div class="wm" style="left:1113.4px;top:379.7px">网址<i>:</i></div><div class="wm u" style="left:1168.4px;top:383.7px">www.tdxsoft.com</div>
<div class="wm" style="left:30.2px;top:460.7px">电话<i>:</i></div><div class="wm d" style="left:85.2px;top:462.7px">4006-6500-27</div>
<div class="wm" style="left:30.2px;top:489.7px">网址<i>:</i></div><div class="wm u" style="left:85.2px;top:493.7px">www.tdxsoft.com</div>
<div class="wm" style="left:301.0px;top:460.7px">电话<i>:</i></div><div class="wm d" style="left:356.0px;top:462.7px">4006-6500-27</div>
<div class="wm" style="left:301.0px;top:489.7px">网址<i>:</i></div><div class="wm u" style="left:356.0px;top:493.7px">www.tdxsoft.com</div>
<div class="wm" style="left:571.8px;top:460.7px">电话<i>:</i></div><div class="wm d" style="left:626.8px;top:462.7px">4006-6500-27</div>
<div class="wm" style="left:571.8px;top:489.7px">网址<i>:</i></div><div class="wm u" style="left:626.8px;top:493.7px">www.tdxsoft.com</div>
<div class="wm" style="left:842.6px;top:460.7px">电话<i>:</i></div><div class="wm d" style="left:897.6px;top:462.7px">4006-6500-27</div>
<div class="wm" style="left:842.6px;top:489.7px">网址<i>:</i></div><div class="wm u" style="left:897.6px;top:493.7px">www.tdxsoft.com</div>
<div class="wm" style="left:1113.4px;top:460.7px">电话<i>:</i></div><div class="wm d" style="left:1168.4px;top:462.7px">4006-6500-27</div>
<div class="wm" style="left:1113.4px;top:489.7px">网址<i>:</i></div><div class="wm u" style="left:1168.4px;top:493.7px">www.tdxsoft.com</div>
<div class="wm" style="left:30.2px;top:570.7px">电话<i>:</i></div><div class="wm d" style="left:85.2px;top:572.7px">4006-6500-27</div>
<div class="wm" style="left:30.2px;top:599.7px">网址<i>:</i></div><div class="wm u" style="left:85.2px;top:603.7px">www.tdxsoft.com</div>
<div class="wm" style="left:301.0px;top:570.7px">电话<i>:</i></div><div class="wm d" style="left:356.0px;top:572.7px">4006-6500-27</div>
<div class="wm" style="left:301.0px;top:599.7px">网址<i>:</i></div><div class="wm u" style="left:356.0px;top:603.7px">www.tdxsoft.com</div>
<div class="wm" style="left:571.8px;top:570.7px">电话<i>:</i></div><div class="wm d" style="left:626.8px;top:572.7px">4006-6500-27</div>
<div class="wm" style="left:571.8px;top:599.7px">网址<i>:</i></div><div class="wm u" style="left:626.8px;top:603.7px">www.tdxsoft.com</div>
<div class="wm" style="left:842.6px;top:570.7px">电话<i>:</i></div><div class="wm d" style="left:897.6px;top:572.7px">4006-6500-27</div>
<div class="wm" style="left:842.6px;top:599.7px">网址<i>:</i></div><div class="wm u" style="left:897.6px;top:603.7px">www.tdxsoft.com</div>
<div class="wm" style="left:1113.4px;top:570.7px">电话<i>:</i></div><div class="wm d" style="left:1168.4px;top:572.7px">4006-6500-27</div>
<div class="wm" style="left:1113.4px;top:599.7px">网址<i>:</i></div><div class="wm u" style="left:1168.4px;top:603.7px">www.tdxsoft.com</div>
</div>
<!--/WM-->
</body></html>
